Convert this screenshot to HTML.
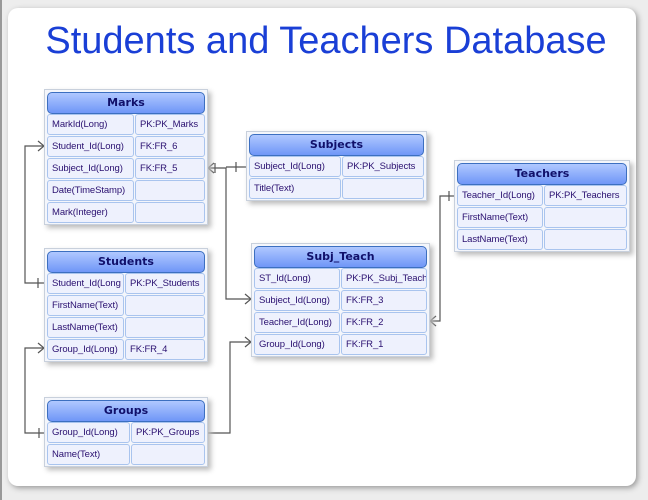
<!DOCTYPE html><html><head><style>
body{margin:0;width:648px;height:500px;background:#ededed;position:relative;overflow:hidden;font-family:"DejaVu Sans","Liberation Sans",sans-serif}
.panel{position:absolute;left:8px;top:8px;width:628px;height:478px;background:#fff;border-radius:10px;box-shadow:2px 2px 6px #999}
.edge{position:absolute;left:0;top:0;width:2px;height:500px;background:#999}
h1{position:absolute;left:0;width:652px;top:20px;margin:0;text-align:center;font:400 38px "Liberation Sans",sans-serif;color:#1a3fd6}
.t{position:absolute;background:#f4f6fb;border:1px solid #c8d0dc;box-shadow:3px 3px 5px #bbb}
.h{position:absolute;left:2px;right:2px;top:2px;height:20px;border:1px solid #3c6fc0;border-radius:5px;background:linear-gradient(#b0c8ff,#6f96f7);color:#10106a;font-weight:bold;font-size:11px;text-align:center;line-height:20px}
.c{position:absolute;box-sizing:border-box;border:1px solid #a9c4ee;border-radius:3px;background:#eef1fd;font:9.5px "Liberation Sans",sans-serif;letter-spacing:-0.1px;color:#2a1070;line-height:20px;padding-left:4px;white-space:nowrap;overflow:hidden}
svg{position:absolute;left:0;top:0}
</style></head><body>
<div class="edge"></div><div class="panel"></div>
<h1>Students and Teachers Database</h1>
<svg width="648" height="500" fill="none" stroke="#555" stroke-width="1.2">
<path d="M44 146H25V283H44M44 348H25V433H44M208 168H226V299H251M226 167H246M208 433H230V342H251M430 321H440V196H454"/>
<path d="M38 141L44 146L38 151M38 343L44 348L38 353M245 294L251 299L245 304M245 337L251 342L245 347M38 278V288M39 428V438M214 163L208 168L214 173M215 163V173M236 162V172M436 316L430 321L436 326M449 191V201M203 428V438" />
</svg>
<div id="root"></div>
<script>
const T=[
[44,89,164,"Marks",90,[["MarkId(Long)","PK:PK_Marks"],["Student_Id(Long)","FK:FR_6"],["Subject_Id(Long)","FK:FR_5"],["Date(TimeStamp)",""],["Mark(Integer)",""]]],
[44,248,164,"Students",80,[["Student_Id(Long","PK:PK_Students"],["FirstName(Text)",""],["LastName(Text)",""],["Group_Id(Long)","FK:FR_4"]]],
[44,397,164,"Groups",86,[["Group_Id(Long)","PK:PK_Groups"],["Name(Text)",""]]],
[246,131,181,"Subjects",95,[["Subject_Id(Long)","PK:PK_Subjects"],["Title(Text)",""]]],
[251,243,179,"Subj_Teach",89,[["ST_Id(Long)","PK:PK_Subj_Teach"],["Subject_Id(Long)","FK:FR_3"],["Teacher_Id(Long)","FK:FR_2"],["Group_Id(Long)","FK:FR_1"]]],
[454,160,176,"Teachers",89,[["Teacher_Id(Long)","PK:PK_Teachers"],["FirstName(Text)",""],["LastName(Text)",""]]]];
let h="";
for(const [x,y,w,n,s,rows] of T){
 const H=24+rows.length*22;
 h+=`<div class="t" style="left:${x}px;top:${y}px;width:${w-2}px;height:${H}px"><div class="h">${n}</div>`;
 rows.forEach((r,i)=>{const ty=24+i*22;
 h+=`<div class="c" style="left:2px;top:${ty}px;width:${s-3}px;height:21px">${r[0]}</div><div class="c" style="left:${s}px;top:${ty}px;width:${w-s-4}px;height:21px">${r[1]}</div>`;});
 h+=`</div>`;}
document.getElementById("root").innerHTML=h;
</script>
</body></html>
